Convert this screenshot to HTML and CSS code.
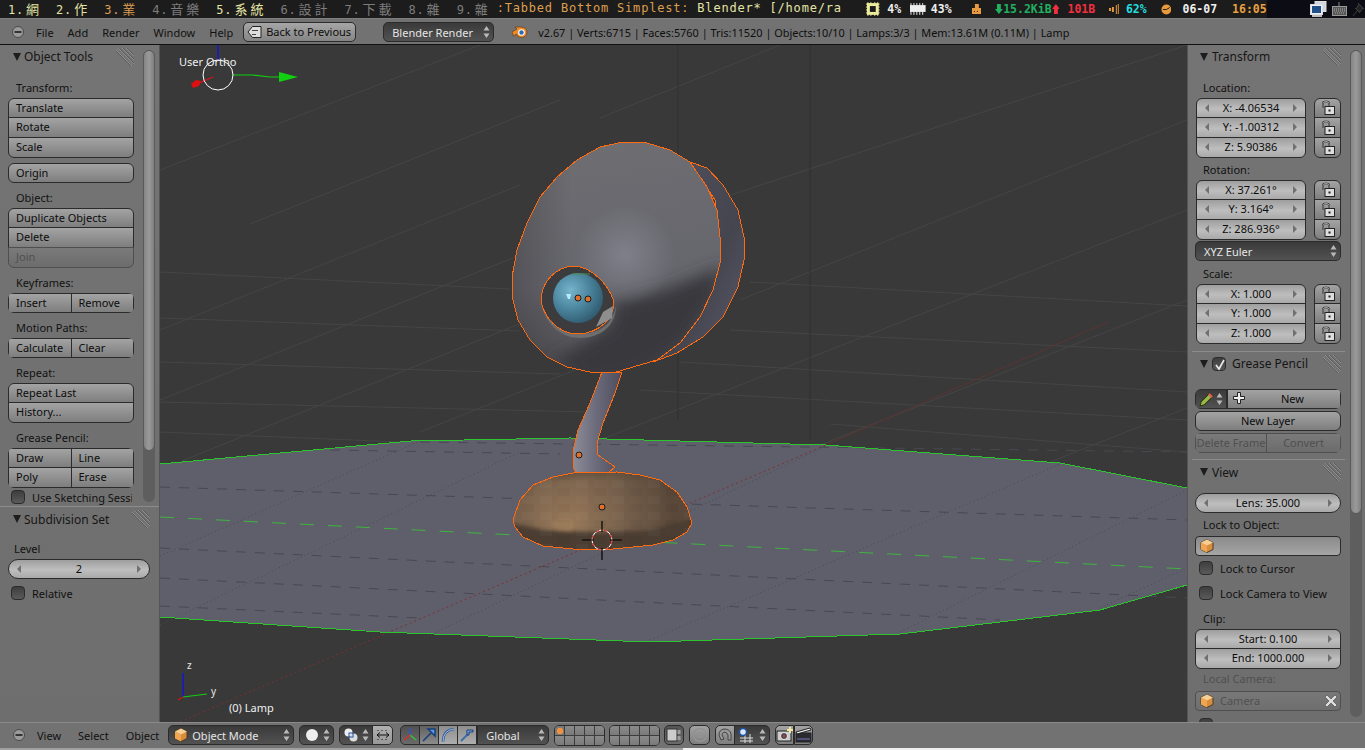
FILE: index.html
```html
<!DOCTYPE html>
<html lang="en">
<head>
<meta charset="utf-8">
<title>Blender</title>
<link rel="stylesheet" href="styles.css">
</head>
<body>
<svg class="sprites" width="0" height="0" aria-hidden="true">
  <symbol id="ud" viewBox="0 0 7 14"><path d="M3.5 1 6.5 5.5H.5ZM3.5 13 .5 8.500H6.500Z"/></symbol>
  <symbol id="lock" viewBox="0 0 16 16"><path d="M3 8V3.500Q3 1.500 5 1.500H7Q9 1.500 9 3.500V6" fill="none" stroke="#111" stroke-width="1.600"/><path d="M3 8V3.500Q3 1.500 5 1.500H7Q9 1.500 9 3.500V6" fill="none" stroke="#eee" stroke-width=".6"/><rect x="5" y="6.500" width="9.500" height="8" fill="#ddd" stroke="#222"/><rect x="8.500" y="9.500" width="2" height="2" fill="#222"/></symbol>
  <symbol id="cube" viewBox="0 0 14 14"><path d="M7 .5 13 3.500V10.500L7 13.500 1 10.500V3.500Z" fill="#d98d3c" stroke="#4a3a28"/><path d="M7 .5 13 3.500 7 6.500 1 3.500Z" fill="#f6cf95"/><path d="M7 6.500V13.500L1 10.500V3.500Z" fill="#efa650"/></symbol>
  <symbol id="grip" viewBox="0 0 18 18"><path d="M2 0 18 16M6 0 18 12M10 0 18 8M0 2 16 18" fill="none" stroke="#8e8e8e"/><path d="M3 0 18 15M7 0 18 11M11 0 18 7M0 3 15 18" fill="none" stroke="#5c5c5c"/></symbol>
  <symbol id="menu" viewBox="0 0 12 12"><circle cx="6" cy="6" r="5.500" fill="#9a9a9a" stroke="#4a4a4a"/><rect x="2.500" y="5" width="7" height="2" fill="#333"/></symbol>
</svg>

<div class="topbar">
  <div class="tags">
    <span class="tag t-y">1.<b>網</b></span>
    <span class="tag t-y">2.<b>作</b></span>
    <span class="tag t-o">3.<b>業</b></span>
    <span class="tag t-g">4.<b>音樂</b></span>
    <span class="tag t-y">5.<b>系統</b></span>
    <span class="tag t-g">6.<b>設計</b></span>
    <span class="tag t-g">7.<b>下載</b></span>
    <span class="tag t-g">8.<b>雜</b></span>
    <span class="tag t-g">9.<b>雜</b></span>
  </div>
  <div class="title"><span class="t-o">:Tabbed Bottom Simplest:</span> <span class="t-y">Blender* [/home/ra</span></div>
  <div class="status">
    <svg class="s-chip" width="16" height="14" viewBox="0 0 16 14"><path d="M1 2H15M1 5H15M1 8H15M1 11H15M3 0V14M6 0V14M10 0V14M13 0V14" stroke="#ecec9c"/><rect x="2" y="1" width="12" height="12" fill="#ecec9c"/><rect x="5" y="4" width="6" height="6" fill="#1c1c1c"/></svg>
    <span class="st st-cpu">4%</span>
    <svg class="s-mem" width="16" height="12" viewBox="0 0 16 12"><rect y="2" width="16" height="7" fill="#eee"/><path d="M1 0V12M4 0V12M7 0V12M10 0V12M13 0V12" stroke="#eee"/></svg>
    <span class="st st-mem">43%</span>
    <svg class="s-home" width="10" height="10" viewBox="0 0 10 10"><path d="M3 0H7V4H10V10H0V4H3Z" fill="#e89a3c"/><rect x="2" y="7" width="1" height="1" fill="#1c1c1c"/><rect x="5" y="7" width="1" height="1" fill="#1c1c1c"/></svg>
    <svg class="s-down" width="8" height="10" viewBox="0 0 8 10"><path d="M2 0H6V5H8L4 10 0 5H2Z" fill="#22b060"/></svg>
    <span class="st st-down">15.2KiB</span>
    <svg class="s-up" width="8" height="10" viewBox="0 0 8 10"><path d="M4 0 8 5H6V10H2V5H0Z" fill="#f03040"/></svg>
    <span class="st st-up">101B</span>
    <svg class="s-vol" width="10" height="10" viewBox="0 0 10 10"><path d="M0 4H2V7H0ZM3 3H5V8H3ZM7 1H8V10H7ZM9 0H10V10H9Z" fill="#e89a3c"/></svg>
    <span class="st st-vol">62%</span>
    <svg class="s-clock" width="11" height="11" viewBox="0 0 11 11"><circle cx="5.500" cy="5.500" r="5" fill="#e89a3c"/><path d="M5.500 5.500 9 3.500M5.500 5.500H2" stroke="#1c1c1c"/></svg>
    <span class="st st-date">06-07</span>
    <span class="st st-time">16:05</span>
  </div>
  <div class="tray">
    <svg width="17" height="17" viewBox="0 0 17 17"><rect x="5" y=".5" width="11" height="10" fill="#cfd6df" stroke="#ddd"/><rect x=".5" y="3.500" width="12" height="10" fill="#eef" stroke="#ddd"/><rect x="2" y="5" width="9" height="7" fill="#1f4f86"/><rect x="2" y="14" width="10" height="2" fill="#bbb"/></svg>
    <svg width="15" height="15" viewBox="0 0 15 15"><path d="M7 0V4" stroke="#888"/><rect x=".5" y="4.500" width="14" height="9" fill="#555" stroke="#999"/><path d="M2 7H13M2 9H13M3 11H12" stroke="#aaa" stroke-dasharray="1 1"/></svg>
    <svg width="13" height="15" viewBox="0 0 13 15"><path d="M1 14 5 9M3 6 8 11M6 1 12 7M7 2 4 7 8 10 11 6Z" stroke="#3c3c3c" fill="#222"/></svg>
  </div>
</div>

<header class="bar infobar">
  <svg class="menuicon"><use href="#menu"/></svg>
  <nav class="menus">
    <span>File</span><span>Add</span><span>Render</span><span>Window</span><span>Help</span>
  </nav>
  <div class="btn back">
    <svg width="15" height="14" viewBox="0 0 15 14"><path d="M14 1.500H5.500L1 7 5.500 12.500H14Z" fill="#ddd" stroke="#222"/><path d="M5 5.500H11M5 9.500H9" stroke="#444"/></svg>
    Back to Previous
  </div>
  <div class="drop engine"><span>Blender Render</span><svg class="ud"><use href="#ud"/></svg></div>
  <svg class="logo" width="16" height="13" viewBox="0 0 16 13"><path d="M0 7 5 4 3 2H9Q15 2 15 8 14 12.500 9 12.500 5 12.500 4.500 9L1.500 11Z" fill="#ee8a28" stroke="#5a3410" stroke-width=".6"/><circle cx="9.500" cy="7.500" r="3.300" fill="#fff"/><circle cx="9.500" cy="7.500" r="2.200" fill="#2a6db4"/></svg>
  <span class="info">v2.67 | Verts:6715 | Faces:5760 | Tris:11520 | Objects:10/10 | Lamps:3/3 | Mem:13.61M (0.11M) | Lamp</span>
</header>

<main class="main">
  <aside class="panel left">
    <section class="sec sec-tools">
      <div class="ph"><i class="tri"></i><span>Object Tools</span><svg class="grip"><use href="#grip"/></svg></div>
      <div class="lab">Transform:</div>
      <div class="grp"><div class="btn">Translate</div><div class="btn">Rotate</div><div class="btn">Scale</div></div>
      <div class="grp gap"><div class="btn">Origin</div></div>
      <div class="lab gap">Object:</div>
      <div class="grp"><div class="btn">Duplicate Objects</div><div class="btn">Delete</div><div class="btn off">Join</div></div>
      <div class="lab gap">Keyframes:</div>
      <div class="grp"><div class="rowb"><div class="btn">Insert</div><div class="btn">Remove</div></div></div>
      <div class="lab gap">Motion Paths:</div>
      <div class="grp"><div class="rowb"><div class="btn">Calculate</div><div class="btn">Clear</div></div></div>
      <div class="lab gap">Repeat:</div>
      <div class="grp"><div class="btn">Repeat Last</div><div class="btn">History...</div></div>
      <div class="lab gap">Grease Pencil:</div>
      <div class="grp"><div class="rowb"><div class="btn">Draw</div><div class="btn">Line</div></div><div class="rowb"><div class="btn">Poly</div><div class="btn">Erase</div></div></div>
      <div class="chk chk-sketch"><i class="box"></i><span>Use Sketching Sessi</span></div>
    </section>
    <section class="sec sec-subd">
      <div class="ph"><i class="tri"></i><span>Subdivision Set</span><svg class="grip"><use href="#grip"/></svg></div>
      <div class="lab">Level</div>
      <div class="num solo">2</div>
      <div class="chk chk-rel"><i class="box"></i><span>Relative</span></div>
    </section>
    <div class="scroll"><div class="thumb"></div></div>
  </aside>

  <div class="viewport">
    <svg class="scene" viewBox="160 45 1027 677" width="1027" height="677">
      <defs>
        <linearGradient id="headG" x1=".45" y1="0" x2=".55" y2="1">
          <stop offset="0" stop-color="#6d6d72"/><stop offset=".6" stop-color="#66666d"/><stop offset="1" stop-color="#4c4b50"/>
        </linearGradient>
        <linearGradient id="headL" x1="0" y1="0" x2="1" y2="0">
          <stop offset="0" stop-color="#000" stop-opacity=".22"/><stop offset=".3" stop-color="#000" stop-opacity="0"/>
        </linearGradient>
        <radialGradient id="headS" gradientUnits="userSpaceOnUse" cx="625" cy="255" r="50">
          <stop offset="0" stop-color="#8a8a96" stop-opacity=".7"/><stop offset="1" stop-color="#8a8a96" stop-opacity="0"/>
        </radialGradient>
        <linearGradient id="shellG" x1="0" y1="0" x2="1" y2="1">
          <stop offset="0" stop-color="#525260"/><stop offset=".6" stop-color="#45454f"/><stop offset="1" stop-color="#5b5b6d"/>
        </linearGradient>
        <radialGradient id="ballG" cx=".35" cy=".35" r=".75">
          <stop offset="0" stop-color="#76b4cc"/><stop offset=".5" stop-color="#4c859e"/><stop offset="1" stop-color="#2c566a"/>
        </radialGradient>
        <linearGradient id="stemG" x1="0" y1="0" x2="1" y2="0">
          <stop offset="0" stop-color="#8d8d99"/><stop offset=".45" stop-color="#6c6c7c"/><stop offset="1" stop-color="#4c4c5c"/>
        </linearGradient>
        <radialGradient id="baseG" gradientUnits="userSpaceOnUse" cx="568" cy="525" r="105">
          <stop offset="0" stop-color="#9a7a5a"/><stop offset=".55" stop-color="#76604c"/><stop offset="1" stop-color="#5a493a"/>
        </radialGradient>
        <pattern id="facetB" width="36" height="16" patternUnits="userSpaceOnUse">
          <rect width="12" height="8" fill="#fff" opacity=".025"/><rect x="18" y="8" width="12" height="8" fill="#000" opacity=".035"/><rect x="12" width="6" height="16" fill="#000" opacity=".015"/>
        </pattern>
        <filter id="soft" x="-30%" y="-30%" width="160%" height="160%"><feGaussianBlur stdDeviation="8"/></filter>
        <filter id="soft2" x="-20%" y="-40%" width="140%" height="180%"><feGaussianBlur stdDeviation="2"/></filter>
        <clipPath id="headClip"><path d="M690 162 670 150 647 143 623 142 600 147 577 160 557 177 540 197 527 223 517 250 512 277 513 300 518 320 530 340 547 357 567 367 590 372 613 373 633 367 657 360 680 343 700 317 713 290 720 263 720 237 717 210 707 187Z"/></clipPath>
        <clipPath id="baseClip"><path d="M513 520 520 500 533 485 553 477 573 473 617 472 640 475 660 480 677 492 687 507 692 523 687 532 673 540 653 545 613 549 573 549 543 546 523 537 515 527Z"/></clipPath>
      </defs>
      <rect class="bg" x="160" y="45" width="1027" height="677"/>
      <g class="grid">
        <path d="M160 272 510 289M750 282 1187 306M160 318 520 331M730 330 1187 352M160 362 560 374M680 362 1187 392M160 402 590 412M640 390 1187 420M160 432 400 442M830 424 1187 452"/>
        <path d="M160 470 620 283M160 400 520 255M160 330 520 185M250 224 560 100M420 432 610 356M600 440 1187 210M820 445 1187 300M1050 462 1187 408M700 205 1187 45M740 300 1187 120M160 170 480 45M780 45 600 118"/>
        <path class="vline" d="M678 45V420M810 45V440"/>
      </g>
      <polygon class="floor" points="160,464 411,441 570,438 826,445 1060,463 1187,488 1187,585 1100,610 900,634 650,642 380,632 160,617"/>
      <g class="fdash">
        <path d="M160 487 1187 520M160 548 1187 598M160 578 1000 620M160 606 420 618"/>
        <path d="M420 442 1187 452M330 450 560 454"/>
      </g>
      <g class="fdot">
        <path d="M160 556 420 441M160 625 520 452M420 640 826 446M650 640 1060 464M900 632 1187 490M1100 608 1187 568"/>
      </g>
      <path class="axis-g" d="M160 517 1187 569"/>
      <path class="axis-r" d="M180 722 380 636 660 516 826 445"/>
      <path class="axis-r2" d="M826 445 1108 322"/>
      <polyline class="flooredge" points="160,464 411,441 570,438 826,445 1060,463 1187,488"/>
      <polyline class="flooredge" points="160,617 380,632 650,642 900,634 1100,610 1187,585"/>

      <path class="shell" d="M690 162 707 168 723 185 738 210 744 237 744 260 738 287 723 317 703 337 677 353 653 362 680 340 710 290 720 240 715 200Z"/>
      <path class="head" fill="url(#headG)" d="M690 162 670 150 647 143 623 142 600 147 577 160 557 177 540 197 527 223 517 250 512 277 513 300 518 320 530 340 547 357 567 367 590 372 613 373 633 367 657 360 680 343 700 317 713 290 720 263 720 237 717 210 707 187Z"/>
      <g clip-path="url(#headClip)">
        <rect x="505" y="135" width="220" height="245" fill="url(#headL)"/>
        <path class="darkzone" filter="url(#soft)" d="M612 304 660 292 724 266 716 300 685 345 640 375 590 385 550 362 590 340 614 322Z"/>
        <circle cx="625" cy="255" r="50" fill="url(#headS)"/>
      </g>
      <path class="ridge" d="M690 162 707 187 717 210 720 237 720 263 713 290 700 317 680 343 657 360"/>
      <path class="bridge" d="M690 162 670 150 647 143 623 142 600 147 577 160 557 177 540 197 527 223 517 250 512 277 513 300 518 320 530 340 547 357 567 367 590 372 613 373 633 367 657 360"/>
      <g class="eye">
        <path class="rim" d="M541 300C543 322 560 338 580 338 600 338 616 326 616 306 612 326 598 334 578 334 558 334 544 318 541 300Z"/>
        <path class="socket" d="M572 266C592 266 609 285 614 302 614 318 600 333 578 334 558 334 542 316 541 298 543 280 556 268 572 266Z"/>
        <path class="wedge" d="M603 312 613 306 612 318 596 327Z"/>
        <circle class="ball" cx="578" cy="298" r="25" fill="url(#ballG)"/>
        <path class="glint" d="M566 294 571 294 570 299 568 299Z"/>
        <path class="glow" d="M572 274 590 274" />
      </g>
      <path class="stem" fill="url(#stemG)" d="M602 372 590 403 578 430 574 447 573 467 577 475 600 477 608 473 615 467 598 455 597 443 603 423 615 393 622 372Z"/>
      <path class="base" fill="url(#baseG)" d="M513 520 520 500 533 485 553 477 573 473 617 472 640 475 660 480 677 492 687 507 692 523 687 532 673 540 653 545 613 549 573 549 543 546 523 537 515 527Z"/>
      <g clip-path="url(#baseClip)">
        <path class="dome" filter="url(#soft2)" d="M510 495 540 480 600 475 660 480 695 500 695 465 510 465Z"/>
        <path class="band" filter="url(#soft2)" d="M510 523 545 530 600 532 650 530 695 518 695 555 510 555Z"/>
        <path class="patch" filter="url(#soft2)" d="M552 522 572 520 573 531 553 529Z"/>
        <rect x="510" y="470" width="185" height="82" fill="url(#facetB)"/>
      </g>
      <path class="bline" d="M513 520 520 500 533 485 553 477 573 473 617 472 640 475 660 480 677 492 687 507 692 523 687 532 673 540 653 545 613 549 573 549 543 546 523 537 515 527Z"/>
      <circle class="odot" cx="578" cy="298" r="3"/>
      <circle class="odot" cx="588" cy="299" r="3"/>
      <circle class="odot" cx="579" cy="455" r="3"/>
      <circle class="odot" cx="602" cy="507" r="3"/>
      <circle class="cur-w" cx="602" cy="540" r="10"/>
      <circle class="cur-r" cx="602" cy="540" r="10"/>
      <path class="cur-x" d="M582 540H594M610 540H622M602 521V532M602 548V560"/>

      <path class="gz-b" d="M218 45V60"/>
      <path class="gz-g" d="M233 75 252 75 270 77 284 77"/>
      <path class="gz-gh" d="M279 72 298 77 279 82Z"/>
      <path class="gz-r" d="M213 77 197 84"/>
      <path class="gz-rh" d="M191 84 196 80 201 81 199 86 193 88Z"/>
      <circle class="gz-c" cx="218" cy="75" r="15"/>
      <text class="vt" x="179" y="66">User Ortho</text>
      <path class="gz-b" d="M183 697V673"/>
      <path class="gz-g" d="M183 697 207 694"/>
      <path class="gz-r" d="M183 697 178 700"/>
      <text class="vs" x="187" y="669">z</text>
      <text class="vs" x="211" y="695">y</text>
      <text class="vt" x="229" y="712">(0) Lamp</text>
    </svg>
  </div>

  <aside class="panel right">
    <section class="sec sec-trans">
      <div class="ph"><i class="tri"></i><span>Transform</span><svg class="grip"><use href="#grip"/></svg></div>
      <div class="lab">Location:</div>
      <div class="tf">
        <div class="grp nums"><div class="num">X: -4.06534</div><div class="num">Y: -1.00312</div><div class="num">Z: 5.90386</div></div>
        <div class="grp locks"><div class="btn"><svg><use href="#lock"/></svg></div><div class="btn"><svg><use href="#lock"/></svg></div><div class="btn"><svg><use href="#lock"/></svg></div></div>
      </div>
      <div class="lab near">Rotation:</div>
      <div class="tf">
        <div class="grp nums"><div class="num">X: 37.261°</div><div class="num">Y: 3.164°</div><div class="num">Z: 286.936°</div></div>
        <div class="grp locks"><div class="btn"><svg><use href="#lock"/></svg></div><div class="btn"><svg><use href="#lock"/></svg></div><div class="btn"><svg><use href="#lock"/></svg></div></div>
      </div>
      <div class="drop euler"><span>XYZ Euler</span><svg class="ud"><use href="#ud"/></svg></div>
      <div class="lab near">Scale:</div>
      <div class="tf">
        <div class="grp nums"><div class="num">X: 1.000</div><div class="num">Y: 1.000</div><div class="num">Z: 1.000</div></div>
        <div class="grp locks"><div class="btn"><svg><use href="#lock"/></svg></div><div class="btn"><svg><use href="#lock"/></svg></div><div class="btn"><svg><use href="#lock"/></svg></div></div>
      </div>
    </section>
    <section class="sec sec-gp">
      <div class="ph"><i class="tri"></i><i class="box checked"><svg width="14" height="14" viewBox="0 0 14 14"><path d="M3 7 6 11 11 2" fill="none" stroke="#eee" stroke-width="1.600"/></svg></i><span>Grease Pencil</span><svg class="grip"><use href="#grip"/></svg></div>
      <div class="grp gp-new">
        <div class="rowb">
          <div class="drop pick"><svg width="15" height="15" viewBox="0 0 14 14"><path d="M1 13 2 9 10 1 13 4 5 12Z" fill="#9bb84a" stroke="#2c3a10"/><path d="M10 1 13 4 11.500 5.500 8.500 2.500Z" fill="#e05a5a"/></svg><svg class="ud"><use href="#ud"/></svg></div>
          <div class="btn newb"><svg width="12" height="12" viewBox="0 0 12 12"><path d="M4.500 .5H7.500V4.500H11.500V7.500H7.500V11.500H4.500V7.500H.5V4.500H4.500Z" fill="#eee" stroke="#222"/></svg><span>New</span></div>
        </div>
      </div>
      <div class="grp gp-gap"><div class="btn ctr">New Layer</div></div>
      <div class="grp gp-gap"><div class="rowb dis"><div class="btn off ctr tight">Delete Frame</div><div class="btn off ctr">Convert</div></div></div>
    </section>
    <section class="sec sec-view">
      <div class="ph"><i class="tri"></i><span>View</span><svg class="grip"><use href="#grip"/></svg></div>
      <div class="num solo">Lens: 35.000</div>
      <div class="lab near">Lock to Object:</div>
      <div class="field"><svg width="14" height="14"><use href="#cube"/></svg></div>
      <div class="chk"><i class="box"></i><span>Lock to Cursor</span></div>
      <div class="chk chk2"><i class="box"></i><span>Lock Camera to View</span></div>
      <div class="lab clip">Clip:</div>
      <div class="grp"><div class="num">Start: 0.100</div><div class="num">End: 1000.000</div></div>
      <div class="lab dim">Local Camera:</div>
      <div class="field dimf"><svg width="14" height="14"><use href="#cube"/></svg><span>Camera</span><svg class="x" width="12" height="12" viewBox="0 0 12 12"><path d="M2 0 6 4 10 0 12 2 8 6 12 10 10 12 6 8 2 12 0 10 4 6 0 2Z" fill="#ddd" stroke="#444" stroke-width=".6"/></svg></div>
      <div class="chk chk3"><i class="box"></i></div>
    </section>
    <div class="scroll"><div class="thumb"></div></div>
  </aside>
</main>

<footer class="bar viewbar">
  <svg class="menuicon"><use href="#menu"/></svg>
  <nav class="menus"><span>View</span><span>Select</span><span>Object</span></nav>
  <div class="drop mode"><svg width="14" height="14"><use href="#cube"/></svg><span>Object Mode</span><svg class="ud"><use href="#ud"/></svg></div>
  <div class="drop shade"><svg width="14" height="14" viewBox="0 0 14 14"><circle cx="7" cy="7" r="6" fill="#eee"/></svg><svg class="ud"><use href="#ud"/></svg></div>
  <div class="pivot">
    <div class="drop piv"><svg width="14" height="14" viewBox="0 0 14 14"><circle cx="4.500" cy="4.500" r="4" fill="#eee"/><circle cx="9.500" cy="9.500" r="4" fill="#ddd"/><rect x="5" y="5" width="4" height="4" fill="none" stroke="#1c54a8"/></svg><svg class="ud"><use href="#ud"/></svg></div>
    <div class="btn ico lite"><svg width="16" height="14" viewBox="0 0 16 14"><path d="M3 3V2M7 3V2M11 3V2M2 7H14M2 7 5 4.500M2 7 5 9.500M14 7 11 4.500M14 7 11 9.500M3 12V11M7 12V11M11 12V11" stroke="#111" fill="none"/></svg></div>
  </div>
  <div class="manip">
    <div class="btn ico act"><svg width="16" height="16" viewBox="0 0 16 16"><path d="M8 8V1" stroke="#2a55d8" stroke-width="1.500"/><path d="M8 8 14 13" stroke="#38c038" stroke-width="1.500"/><path d="M8 8 2 13" stroke="#e02828" stroke-width="1.500"/></svg></div>
    <div class="btn ico mid"><svg width="16" height="16" viewBox="0 0 16 16"><path d="M2 14 10 6M7 2H14V9Z" stroke="#163e7a" fill="#5c9ae0" stroke-width="1.500"/></svg></div>
    <div class="btn ico lite2"><svg width="16" height="16" viewBox="0 0 16 16"><path d="M3 15Q3 3 14 2" stroke="#3e5e92" stroke-width="2.500" fill="none"/><path d="M3 15Q3 3 14 2" stroke="#8eb8e8" fill="none"/></svg></div>
    <div class="btn ico lite2"><svg width="16" height="16" viewBox="0 0 16 16"><path d="M2 14 9 7" stroke="#3e6ea8" stroke-width="2"/><path d="M8 3H14V5H10V8H8Z" fill="#7aa8e0" stroke="#163e7a"/></svg></div>
    <div class="drop glob"><span>Global</span><svg class="ud"><use href="#ud"/></svg></div>
  </div>
  <div class="layers">
    <div class="lay"><i class="on"></i><i></i><i></i><i></i><i></i><i></i><i></i><i></i><i></i><i></i></div>
    <div class="lay"><i></i><i></i><i></i><i></i><i></i><i></i><i></i><i></i><i></i><i></i></div>
  </div>
  <div class="btn ico solo-ico link"><svg width="16" height="16" viewBox="0 0 16 16"><rect x="1" y="2" width="10" height="12" fill="#ccc" stroke="#333"/><path d="M13 3V7M13 9V13" stroke="#eee" stroke-width="2.500"/><path d="M13 3V7M13 9V13" stroke="#222" stroke-width=".8"/></svg></div>
  <div class="btn ico solo-ico prop"><svg width="16" height="16" viewBox="0 0 16 16"><circle cx="8" cy="8" r="6.500" fill="none" stroke="#939393" stroke-width="1.500"/><circle cx="8" cy="8" r="2.500" fill="none" stroke="#939393" stroke-width="1.500"/></svg></div>
  <div class="snap">
    <div class="btn ico magnet"><svg width="16" height="16" viewBox="0 0 16 16"><path d="M4 13 2 8Q2 3 7 2 13 2 14 7L14 13 11 13 11 8Q10 5 7 5 5 6 5 8L7 12Z" fill="#999" stroke="#444"/></svg></div>
    <div class="drop snp"><svg width="16" height="16" viewBox="0 0 16 16"><path d="M2 11H15M2 14H15M7 7V16M12 7V16" stroke="#ddd"/><circle cx="5" cy="5" r="3.500" fill="#dce8f8" stroke="#1c54a8" stroke-width="1.500"/></svg><svg class="ud"><use href="#ud"/></svg></div>
  </div>
  <div class="render">
    <div class="btn ico"><svg width="17" height="16" viewBox="0 0 17 16"><rect x="1" y="4" width="14" height="10" fill="#ccc" stroke="#222"/><circle cx="8" cy="9" r="3.500" fill="#444" stroke="#eee"/><circle cx="8" cy="9" r="1.500" fill="#b04040"/><path d="M14 0V6M11 3H17" stroke="#f5e8a0" stroke-width="2"/></svg></div>
    <div class="btn ico"><svg width="17" height="16" viewBox="0 0 17 16"><rect x="1" y="6" width="15" height="9" fill="#2a2a30" stroke="#222"/><path d="M2 12H15" stroke="#77b"/><path d="M1 5 15 1 16 3 2 7Z" fill="#eee" stroke="#222"/></svg></div>
  </div>
  <div class="edge"></div>
</footer>
</body>
</html>
```
FILE: styles.css
```css
* { box-sizing: border-box; }
html, body { margin: 0; padding: 0; }
body {
  width: 1365px;
  height: 750px;
  overflow: hidden;
  display: flex;
  flex-direction: column;
  background: #727272;
  font-family: "Noto Sans", "Open Sans", sans-serif;
  font-size: 11px;
  color: #111;
}
.sprites { position: absolute; }

/* window-manager bar */
.topbar {
  flex: none;
  height: 18px;
  display: flex;
  background: #1c1c1c;
  font-family: "DejaVu Sans Mono", "Noto Sans CJK TC", monospace;
  font-size: 12px;
  line-height: 17px;
  letter-spacing: .8px;
  white-space: nowrap;
  overflow: hidden;
}
.tags { display: flex; flex: none; }
.tag { padding: 0 8px; }
.tag b {
  font: 400 13px/17px "Noto Sans CJK TC", sans-serif;
  letter-spacing: 3px;
  padding-left: 2px;
  margin-right: -2px;
}
.t-y { color: #e4e4a4; }
.t-o { color: #dd9f50; }
.t-g { color: #7d7d7d; }
.title { flex: none; width: 368px; white-space: pre; overflow: hidden; }
.status { flex: none; width: 402px; display: flex; align-items: center; font-weight: 700; font-size: 11.500px; letter-spacing: 0; }
.st { flex: none; }
.st-cpu { margin-left: 7px; color: #eee; }
.s-mem { margin-left: 9px; }
.st-mem { margin-left: 5px; color: #eee; }
.s-home { margin-left: 20px; }
.s-down { margin-left: 14px; }
.st-down { color: #22b060; }
.s-up { margin-left: 0; }
.st-up { margin-left: 8px; color: #f03040; }
.s-vol { margin-left: 14px; }
.st-vol { margin-left: 7px; color: #22dede; }
.s-clock { margin-left: 14px; }
.st-date { margin-left: 11px; color: #eee; }
.st-time { margin-left: 15px; color: #e8a040; }
.tray {
  flex: 1;
  background: #0c0c14;
  display: flex;
  justify-content: flex-end;
  align-items: center;
  gap: 5px;
}

/* header bars */
.bar {
  flex: none;
  display: flex;
  align-items: center;
  background: #727272;
  white-space: nowrap;
}
.infobar { height: 27px; border-top: 1px solid #7e7e7e; border-bottom: 1px solid #111; }
.viewbar { height: 28px; border-top: 1px solid #8a8a8a; position: relative; padding-bottom: 3px; }
.menuicon { flex: none; width: 12px; height: 12px; }
.infobar .menuicon { margin: 0 12px 0 12px; }
.viewbar .menuicon { margin: 0 12px 0 13px; }
.menus { display: flex; gap: 14px; color: #111; flex: none; padding-top: 1px; }
.viewbar .menus { gap: 17px; }

.btn {
  flex: 1;
  height: 20px;
  display: flex;
  align-items: center;
  padding: 0 0 2px 7px;
  border: 1px solid #2b2b2b;
  background: linear-gradient(#a3a3a3, #7e7e7e);
  color: #0c0c0c;
  overflow: hidden;
  white-space: nowrap;
}
.back {
  flex: none;
  width: 113px;
  margin-left: 10px;
  border-radius: 5px;
  gap: 4px;
  padding: 0 0 0 3px;
  background: linear-gradient(#a6a6a6, #858585);
}
.drop {
  display: flex;
  align-items: center;
  height: 20px;
  flex: none;
  position: relative;
  padding-left: 8px;
  border: 1px solid #2b2b2b;
  border-radius: 5px;
  background: linear-gradient(#3a3a3a, #525252);
  color: #e6e6e6;
}
.drop span { padding-top: 1px; }
.ud { width: 7px; height: 14px; fill: #b9b9b9; position: absolute; right: 3px; top: 2px; }
.engine { width: 111px; margin-left: 27px; }
.logo { flex: none; margin-left: 18px; }
.info { margin-left: 10px; color: #0e0e0e; font-size: 10.900px; padding-top: 1px; }

/* main row */
.main { flex: 1; display: flex; min-height: 0; }
.viewport { flex: none; width: 1027px; background: #393939; overflow: hidden; }
.scene { display: block; }
.panel {
  flex: none;
  position: relative;
  background: linear-gradient(#747474, #6e6e6e);
  overflow: hidden;
}
.left { width: 160px; border-right: 1px solid #555; }
.right { width: 178px; border-left: 1px solid #555; }

.ph { display: flex; align-items: center; position: relative; font-size: 12px; color: #161616; }
.tri {
  flex: none;
  width: 0;
  height: 0;
  margin-right: 3px;
  border-left: 4px solid transparent;
  border-right: 4px solid transparent;
  border-top: 8px solid #1d1d1d;
}
.right .tri { margin-right: 4px; }
.grip { width: 18px; height: 18px; margin-left: auto; flex: none; }
.lab { height: 20px; line-height: 20px; color: #111; padding-left: 8px; }
.gap { margin-top: 5px; }
.near { margin-top: 2px; }

.grp { display: flex; flex-direction: column; }
.grp > .btn, .grp > .num, .grp > .rowb { flex: none; height: 21px; margin-top: -1px; border-radius: 0; }
.grp > :first-child { margin-top: 0; border-top-left-radius: 6px; border-top-right-radius: 6px; }
.grp > .btn:first-child, .grp > .num:first-child, .grp > .rowb:first-child { height: 20px; margin-top: 0; }
.grp > :last-child { border-bottom-left-radius: 6px; border-bottom-right-radius: 6px; }
.rowb { display: flex; overflow: hidden; }
.rowb > .btn { height: 100%; }
.rowb > .btn + .btn { margin-left: -1px; }
.grp > .rowb { border-radius: 0; }
.grp > .rowb:first-child { border-top-left-radius: 6px; border-top-right-radius: 6px; }
.grp > .rowb:last-child { border-bottom-left-radius: 6px; border-bottom-right-radius: 6px; }
.off { color: #505050; background: linear-gradient(#7a7a7a, #6c6c6c); border-color: #4f4f4f; }

.num {
  position: relative;
  height: 20px;
  display: flex;
  align-items: center;
  justify-content: center;
  padding-bottom: 2px;
  border: 1px solid #2b2b2b;
  background: linear-gradient(#9e9e9e, #bebebe 55%, #a9a9a9);
  color: #0c0c0c;
}
.num::before, .num::after {
  content: "";
  position: absolute;
  top: 5px;
  border-top: 4px solid transparent;
  border-bottom: 4px solid transparent;
}
.num::before { left: 8px; border-right: 4px solid #707070; }
.num::after { right: 8px; border-left: 4px solid #707070; }
.num.solo { border-radius: 10px; }

.box {
  flex: none;
  display: block;
  width: 14px;
  height: 14px;
  border: 1px solid #2b2b2b;
  border-radius: 4px;
  background: linear-gradient(#3e3e3e, #5a5a5a);
}
.chk { display: flex; align-items: center; height: 20px; gap: 7px; white-space: nowrap; overflow: hidden; }

/* left panel */
.left .sec { padding: 0 0 0 8px; }
.sec-tools { height: 462px; border-bottom: 1px solid #8c8c8c; }
.sec-tools .ph { height: 33px; padding: 0 0 10px 5px; width: 126px; }
.sec-tools .grp { width: 126px; }
.sec-tools .chk-sketch { padding-left: 3px; width: 124px; height: 18px; }
.sec-subd .ph { height: 32px; padding: 0 0 8px 5px; width: 142px; }
.sec-subd .lab { padding-left: 6px; }
.sec-subd .num.solo { width: 142px; }
.sec-subd .chk-rel { margin-top: 4px; padding-left: 3px; }
.scroll {
  position: absolute;
  top: 5px;
  width: 12px;
  border-radius: 6px;
  background: #5e5e5e;
}
.left .scroll { left: 143px; height: 452px; }
.right .scroll { left: 162px; height: 667px; }
.thumb { border-radius: 6px; background: linear-gradient(90deg, #858585, #9a9a9a 50%, #7f7f7f); border: 1px solid #5a5a5a; }
.left .thumb { height: 401px; }
.right .thumb { height: 464px; }

/* right panel */
.right .sec { padding: 0 0 0 7px; width: 153px; }
.sec-trans { height: 306px; position: relative; }
.right .ph { width: 146px; padding-left: 5px; }
.sec-trans .ph { height: 33px; padding-bottom: 10px; }
.tf { display: flex; width: 146px; justify-content: space-between; padding-left: 1px; }
.nums { width: 110px; }
.locks { width: 27px; }
.locks .btn { justify-content: center; padding: 0; }
.locks svg { width: 16px; height: 16px; }
.euler { width: 146px; margin-top: 1px; }
.sec-trans .euler + .lab { margin-top: 3px; }

.right .sec-gp, .right .sec-view { border-top: 1px solid #8c8c8c; margin-left: 4px; padding-left: 3px; width: 153px; }
.sec-gp { height: 108px; }
.sec-gp .ph { height: 37px; padding-bottom: 14px; margin-left: 0; }
.sec-gp .ph .box { margin: 0 6px 0 0; }
.grp.gp-new, .grp.gp-gap { width: 146px; }
.gp-gap { margin-top: 2px; }
.pick { width: 32px; height: 100%; border-radius: 0; padding-left: 3px; flex: none; }
.newb { gap: 0; padding-left: 5px; position: relative; }
.newb span { margin-left: 36px; }
.ctr { justify-content: center; padding: 0 0 2px; }
.dis > .tight { flex: none; width: 72px; }

.sec-view .ph { height: 33px; padding-bottom: 9px; }
.sec-view .num.solo { width: 146px; }
.sec-view .lab { padding-left: 8px; }
.field {
  width: 146px;
  height: 20px;
  margin-top: 1px;
  display: flex;
  align-items: center;
  gap: 6px;
  padding-left: 4px;
  border: 1px solid #2b2b2b;
  border-radius: 4px;
  background: linear-gradient(#8a8a8a, #a6a6a6);
}
.field span { padding-bottom: 2px; }
.sec-view .chk { margin-top: 2px; padding-left: 4px; }
.sec-view .chk2 { margin-top: 5px; }
.lab.clip { margin-top: 6px; }
.sec-view .grp { width: 146px; }
.dim { color: #505050; }
.dimf { background: linear-gradient(#787878, #6e6e6e); border-color: #4f4f4f; color: #505050; margin-top: 2px; position: relative; }
.dimf .x { position: absolute; right: 3px; top: 3px; }
.sec-view .chk3 { margin-top: 4px; }

/* bottom toolbar pieces */
.mode { width: 126px; margin-left: 9px; gap: 4px; padding-left: 5px; }
.shade { width: 35px; margin-left: 5px; padding-left: 5px; }
.pivot { display: flex; margin-left: 5px; flex: none; }
.piv { width: 34px; padding-left: 4px; border-radius: 5px 0 0 5px; }
.ico { flex: none; width: 20px; padding: 0; justify-content: center; margin-left: -1px; }
.lite { border-radius: 0 5px 5px 0; background: linear-gradient(#b0b0b0, #989898); width: 21px; }
.manip { display: flex; margin-left: 7px; flex: none; }
.manip > .ico:first-child { border-radius: 5px 0 0 5px; margin-left: 0; }
.act { background: linear-gradient(#505050, #6a6a6a); }
.mid { background: linear-gradient(#606060, #8c8c8c); }
.lite2 { background: linear-gradient(#8e8e8e, #aeaeae); }
.glob { width: 72px; padding-left: 8px; border-radius: 0 5px 5px 0; }
.layers { display: flex; gap: 4px; margin-left: 5px; flex: none; }
.lay {
  display: grid;
  grid-template-columns: repeat(5, 10px);
  grid-template-rows: repeat(2, 10px);
  border: 1px solid #2b2b2b;
  border-radius: 5px;
  overflow: hidden;
  width: 51px;
  height: 21px;
  background: #747474;
}
.lay i { border-right: 1px solid #3c3c3c; border-bottom: 1px solid #3c3c3c; background: linear-gradient(#8a8a8a, #7a7a7a); }
.lay i.on { background: radial-gradient(circle at 5px 5px, #f0923a 0 3px, #7a7a7a 3.500px); }
.solo-ico { border-radius: 5px; margin-left: 0; }
.link { margin-left: 4px; background: linear-gradient(#555, #6a6a6a); }
.prop { margin-left: 5px; width: 21px; }
.snap { display: flex; margin-left: 5px; flex: none; }
.magnet { border-radius: 5px 0 0 5px; margin-left: 0; }
.snp { width: 36px; padding-left: 3px; border-radius: 0 5px 5px 0; margin-left: -1px; }
.render { display: flex; margin-left: 5px; flex: none; }
.render .ico { width: 19px; margin-left: 0; }
.render .ico:first-child { border-radius: 5px 0 0 5px; }
.render .ico:last-child { border-radius: 0 5px 5px 0; }
.edge {
  position: absolute;
  left: 0;
  right: 0;
  bottom: 0;
  height: 2px;
  background: linear-gradient(90deg, #a0a0a0 683px, #f0f0f0 683px);
}

/* 3D view */
.bg { fill: #393939; }
.grid path { fill: none; stroke: #454545; stroke-width: 1; }
.grid .vline { stroke: #313131; }
.floor { fill: #5f5f6b; }
.fdash path { fill: none; stroke: #484852; stroke-dasharray: 10 9; }
.fdot path { fill: none; stroke: #4a4a54; stroke-dasharray: 1 3; }
.axis-g { fill: none; stroke: #3eb53e; stroke-dasharray: 14 14; }
.axis-r { fill: none; stroke: #7e3030; stroke-dasharray: 2 3; }
.axis-r2 { fill: none; stroke: #5c3434; }
.flooredge { fill: none; stroke: #2dc52d; stroke-width: 1; shape-rendering: crispEdges; }
.shell { fill: url(#shellG); stroke: #ff6a10; stroke-width: 1; shape-rendering: crispEdges; }
.head { stroke: none; }
.darkzone { fill: #38373c; }
.ridge, .bridge { fill: none; stroke: #ff6a10; stroke-width: 1; shape-rendering: crispEdges; }
.rim { fill: #6e6e6e; }
.socket { fill: #3c3c3e; stroke: #ff6a10; stroke-width: 1; shape-rendering: crispEdges; }
.wedge { fill: #8e8e8e; }
.glint { fill: #b6ecff; }
.glow { fill: none; stroke: #4a8a4a; stroke-width: 1; }
.stem { stroke: #ff6a10; stroke-width: 1; shape-rendering: crispEdges; }
.base { stroke: none; }
.dome { fill: #5e4d3e; opacity: .6; }
.band { fill: #4c3e32; }
.patch { fill: #a4835f; opacity: .7; }
.bline { fill: none; stroke: #ff6a10; stroke-width: 1; shape-rendering: crispEdges; }
.odot { fill: #e0702a; stroke: #1c1c1c; stroke-width: 1; }
.cur-w { fill: none; stroke: #fff; stroke-width: 1; }
.cur-r { fill: none; stroke: #d81818; stroke-width: 1; stroke-dasharray: 4 4; }
.cur-x { fill: none; stroke: #000; stroke-width: 1.200; }
.gz-b { fill: none; stroke: #1414e0; stroke-width: 1.400; }
.gz-g { fill: none; stroke: #10d010; stroke-width: 1.200; }
.gz-gh { fill: #10d010; }
.gz-r { fill: none; stroke: #e01010; stroke-width: 1.200; }
.gz-rh { fill: #e01010; }
.gz-c { fill: none; stroke: #fff; stroke-width: 1; }
.vt { fill: #f0f0f0; font-family: "Noto Sans", sans-serif; font-size: 11px; }
.vs { fill: #e8e8e8; font-family: "Noto Sans", sans-serif; font-size: 10px; }
```
